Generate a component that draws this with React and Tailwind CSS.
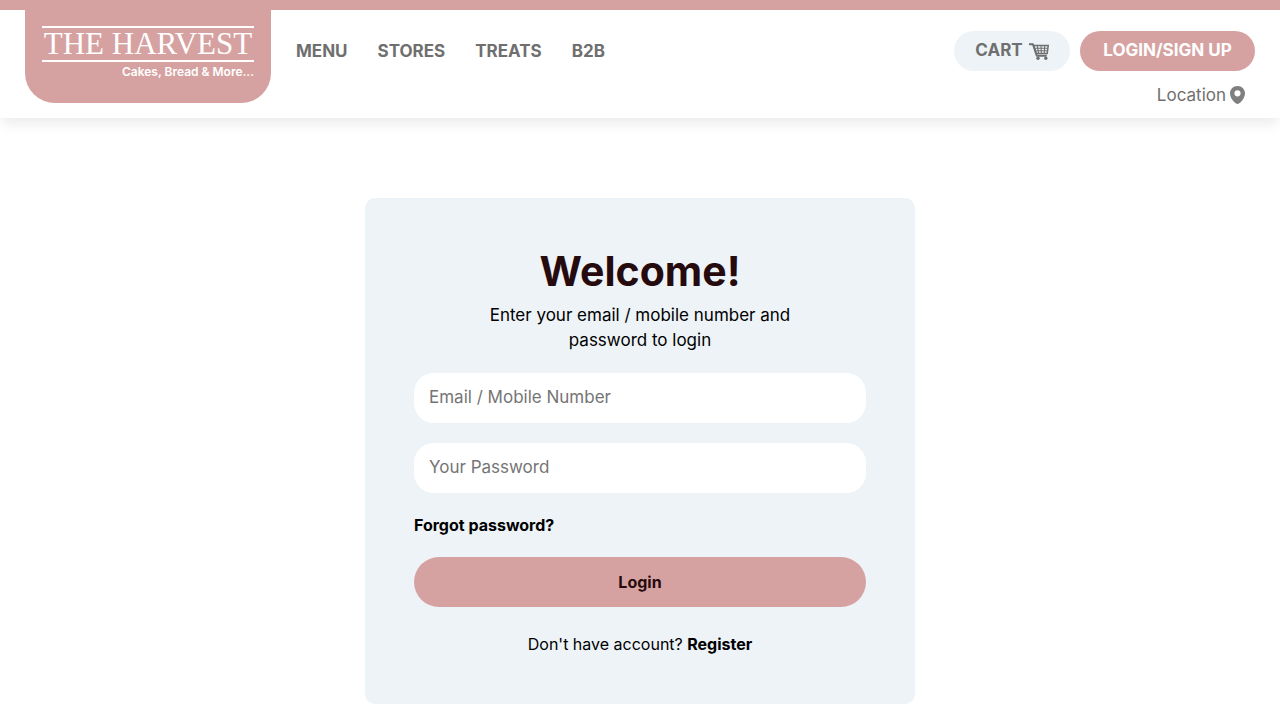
const navItems = ["MENU", "STORES", "TREATS", "B2B"];

function CartIcon() {
  return (
    <svg viewBox="0 0 20 17" className="h-[17px] w-5" fill="none" stroke="currentColor" aria-hidden="true">
      <path d="M0 1.2H4L7.8 12.800H17.800" strokeWidth="2" strokeLinejoin="round" />
      <path d="M4.500 2.600H19.200L18.200 10.400H7Z" strokeWidth="1.500" />
      <path d="M5.400 5.200H18.900M6.300 7.800H18.500M8.300 2.600L9.600 10.400M12 2.600L12.300 10.400M15.700 2.600L15.300 10.400" strokeWidth="1.100" />
      <circle cx="9" cy="15.300" r="1.700" fill="currentColor" stroke="none" />
      <circle cx="16.800" cy="15.300" r="1.700" fill="currentColor" stroke="none" />
    </svg>
  );
}

function PinIcon() {
  return (
    <svg viewBox="0 0 15 18" className="h-[18px] w-[15px] text-[#7f7f7f]" fill="currentColor" aria-hidden="true">
      <path
        fillRule="evenodd"
        d="M7.5 0C3.3 0 0 3.2 0 7.2c0 3.600 2 6.800 4.700 9.400 1.900 1.800 3.700 1.800 5.600 0C13 14 15 10.800 15 7.200 15 3.200 11.700 0 7.500 0Zm0 4.200a3.100 3.100 0 1 1 0 6.200 3.100 3.100 0 0 1 0-6.200Z"
      />
    </svg>
  );
}

function Logo() {
  return (
    <a
      href="#home"
      className="-mt-2.5 flex h-[103px] w-[246px] shrink-0 flex-col items-center rounded-b-[30px] bg-[#d6a2a1] pt-[26px] text-white"
    >
      <span className="flex h-9 w-[212px] items-center justify-center border-y-2 border-white font-['Liberation_Serif',serif] text-[31px] leading-8 whitespace-nowrap">
        THE HARVEST
      </span>
      <span className="w-[212px] text-right text-xs leading-5 font-semibold whitespace-nowrap">
        Cakes, Bread &amp; More...
      </span>
    </a>
  );
}

function Header() {
  return (
    <header className="flex h-[118px] items-start border-t-[10px] border-[#d6a2a1] bg-white px-[25px] text-[17px] text-[#6f6f6f] shadow-[0_8px_12px_-2px_rgba(0,0,0,0.08)]">
      <Logo />
      <nav className="ml-[25px] flex gap-[30px] pt-[29px] leading-6 font-bold">
        {navItems.map((item) => (
          <a key={item} href={"#" + item.toLowerCase()}>
            {item}
          </a>
        ))}
      </nav>
      <div className="ml-auto flex flex-col items-end pt-[21px]">
        <div className="flex gap-2.5 font-bold">
          <button type="button" className="flex h-10 w-29 items-center justify-center gap-1.5 rounded-[20px] bg-[#edf3f7]">
            CART
            <CartIcon />
          </button>
          <button type="button" className="h-10 w-[175px] rounded-[20px] bg-[#d6a2a1] text-white">
            LOGIN/SIGN UP
          </button>
        </div>
        <a href="#location" className="mt-3 mr-2.5 flex items-center gap-1 leading-6">
          Location
          <PinIcon />
        </a>
      </div>
    </header>
  );
}

function Field({ label, type }) {
  return (
    <input
      type={type}
      aria-label={label}
      placeholder={label}
      className="block h-[50px] w-full rounded-[20px] bg-white px-[15px] pb-0.5 text-[17px] text-black outline-none placeholder:text-[#757575]"
    />
  );
}

export default function App() {
  return (
    <div className="bg-white font-[Inter,sans-serif] text-black">
      <Header />
      <main className="flex justify-center px-4 pt-20 pb-4">
        <form
          onSubmit={(event) => event.preventDefault()}
          className="w-full max-w-[550px] rounded-[10px] bg-[#edf3f7] px-[49px] pt-12 pb-12"
        >
          <h1 className="text-center text-[41px] leading-[50px] font-bold text-[#260b0e]">Welcome!</h1>
          <p className="mx-auto mt-[7px] max-w-80 text-center text-[17px] leading-[25px]">
            Enter your email / mobile number and password to login
          </p>
          <div className="mt-5 flex flex-col gap-5">
            <Field label="Email / Mobile Number" type="text" />
            <Field label="Your Password" type="password" />
          </div>
          <a href="#forgot" className="mt-5 block w-fit text-base leading-6 font-bold">
            Forgot password?
          </a>
          <button
            type="submit"
            className="mt-5 h-[50px] w-full rounded-[25px] bg-[#d6a2a1] text-base font-bold text-[#260b0e]"
          >
            Login
          </button>
          <p className="mt-[25px] text-center text-base leading-6">
            Don't have account?{" "}
            <a href="#register" className="font-bold">
              Register
            </a>
          </p>
        </form>
      </main>
    </div>
  );
}
